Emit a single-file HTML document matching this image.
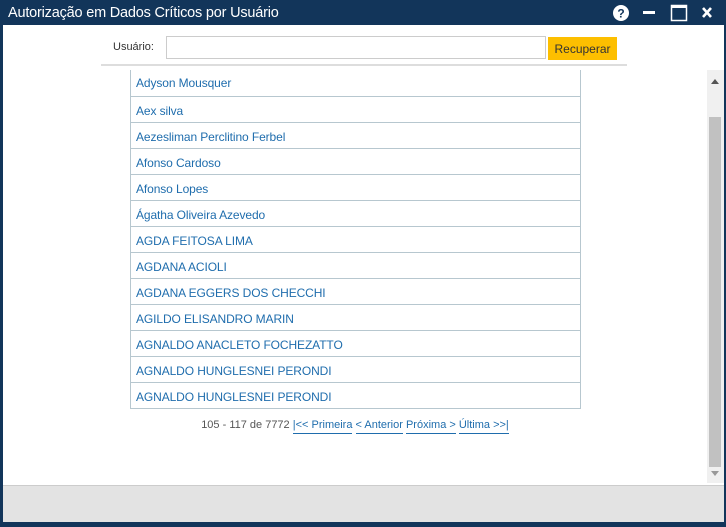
<!DOCTYPE html>
<html><head><meta charset="utf-8"><style>
*{margin:0;padding:0;box-sizing:border-box}
body{width:726px;height:527px;background:#12355a;font-family:"Liberation Sans",sans-serif;position:relative;overflow:hidden}
.title{position:absolute;left:8px;top:5px;color:#fff;font-size:14.5px;letter-spacing:-0.2px}
.body{position:absolute;left:3px;top:25px;width:721px;height:460px;background:#fff}
.foot{position:absolute;left:3px;top:485px;width:721px;height:37px;background:#e3e3e3;border-top:1px solid #ccc}
.lbl{position:absolute;left:113px;top:41px;font-size:11px;color:#333}
.inp{position:absolute;left:166px;top:36px;width:380px;height:23px;border:1px solid #ccc}
.btn{position:absolute;left:548px;top:37px;width:69px;height:23px;background:#fdbf00;font-size:12px;color:#333;text-align:center;line-height:25px}
.hr{position:absolute;left:101px;top:64px;width:526px;height:2px;background:#ddd}
.list{position:absolute;left:130px;top:70px;width:451px;border:1px solid #b7c7cf;border-top:none}
.row{height:26px;border-top:1px solid #b7c7cf;font-size:12px;color:#1f6dad;padding-left:5px;line-height:28px;letter-spacing:-0.1px}
.row:first-child{border-top:none;line-height:27px}
.pg{position:absolute;left:0;width:710px;top:419px;text-align:center;font-size:11px;color:#555}
.pg a{color:#1f6dad;text-decoration:none;border-bottom:1px solid #1f6dad;padding-bottom:2px}
.sb{position:absolute;left:707px;top:70px;width:17px;height:413px;background:#f0f0f0}
.th{position:absolute;left:709px;top:117px;width:12px;height:350px;background:#c1c1c1}
</style></head><body>
<div class="title">Autorização em Dados Críticos por Usuário</div>
<svg style="position:absolute;left:612px;top:4px" width="110" height="18">
<circle cx="9" cy="9" r="8" fill="#fff"/><text x="9" y="13.5" font-size="12" font-weight="bold" text-anchor="middle" fill="#12355a" font-family="Liberation Sans">?</text>
<rect x="31" y="7" width="12" height="3" fill="#fff"/>
<rect x="59.5" y="1.5" width="15" height="15" fill="none" stroke="#fff" stroke-width="1.5"/><rect x="59" y="1" width="16" height="3" fill="#fff"/>
<path d="M91 4l8 9M99 4l-8 9" stroke="#fff" stroke-width="2.6"/>
</svg>
<div class="body"></div>
<div class="lbl">Usuário:</div><div class="inp"></div><div class="btn">Recuperar</div>
<div class="hr"></div>
<div class="list">
<div class="row">Adyson Mousquer</div><div class="row">Aex silva</div><div class="row">Aezesliman Perclitino Ferbel</div><div class="row">Afonso Cardoso</div><div class="row">Afonso Lopes</div><div class="row">Ágatha Oliveira Azevedo</div><div class="row">AGDA FEITOSA LIMA</div><div class="row">AGDANA ACIOLI</div><div class="row">AGDANA EGGERS DOS CHECCHI</div><div class="row">AGILDO ELISANDRO MARIN</div><div class="row">AGNALDO ANACLETO FOCHEZATTO</div><div class="row">AGNALDO HUNGLESNEI PERONDI</div><div class="row">AGNALDO HUNGLESNEI PERONDI</div>
</div>
<div class="pg">105 - 117 de 7772 <a>|&lt;&lt; Primeira</a> <a>&lt; Anterior</a> <a>Próxima &gt;</a> <a>Última &gt;&gt;|</a></div>
<div class="sb"></div><div class="th"></div>
<svg style="position:absolute;left:711px;top:79px" width="8" height="5"><path d="M0 5L4 0L8 5Z" fill="#555"/></svg>
<svg style="position:absolute;left:711px;top:471px" width="8" height="5"><path d="M0 0L4 5L8 0Z" fill="#999"/></svg>
<div class="foot"></div>
</body></html>
